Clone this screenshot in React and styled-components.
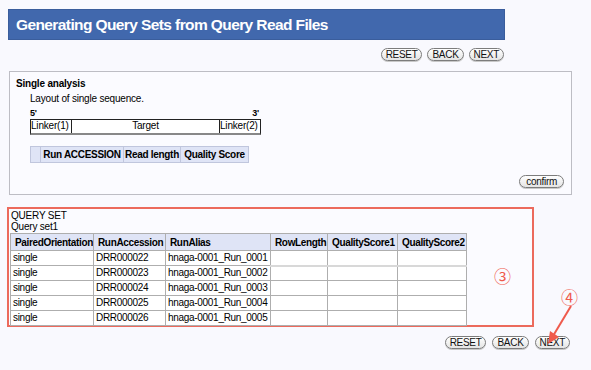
import React from 'react'
import styled, { createGlobalStyle } from 'styled-components'

const GlobalStyle = createGlobalStyle`
  body {
    margin: 0;
    background: #f9f9fe;
    font-family: "Liberation Sans", Arial, sans-serif;
    color: #000;
  }
`

const Page = styled.div`
  position: relative;
  width: 591px;
  height: 370px;
  padding-top: 9px;
  box-sizing: border-box;
`

const Header = styled.h1`
  margin: 0 0 0 8px;
  width: 497px;
  height: 31px;
  box-sizing: border-box;
  background: #4168ad;
  border: 1px solid #3a5d9c;
  color: #fff;
  font-size: 15.5px;
  font-weight: bold;
  line-height: 29px;
  padding-left: 7px;
  letter-spacing: -0.6px;
`

const ButtonRow = styled.div`
  display: flex;
  justify-content: flex-end;
  gap: ${p => p.gap || 5}px;
  width: ${p => p.width}px;
  margin-top: ${p => p.top}px;
`

const Pill = styled.button`
  height: 13px;
  padding: 0 ${p => p.pad || 4}px;
  border: 1px solid #7c7c7c;
  border-radius: 7px;
  background: linear-gradient(#ffffff, #e4e4e4);
  font-family: "Liberation Sans", Arial, sans-serif;
  font-size: 10px;
  letter-spacing: -0.3px;
  line-height: 11px;
  color: #111;
  box-shadow: 0 1px 0 #c8c8c8;
`

const Panel = styled.div`
  margin: ${p => p.top}px 0 0 ${p => p.left}px;
  width: ${p => p.width}px;
  height: ${p => p.height}px;
  box-sizing: border-box;
  border: ${p => (p.red ? '2px solid #ec6a5c' : '1px solid #bdbdc4')};
  background: #fbfbff;
  padding: ${p => p.pad};
  position: relative;
  font-size: 10px;
  letter-spacing: -0.2px;
`

const Bold = styled.div`
  font-weight: bold;
  font-size: 10px;
  height: 13px;
  line-height: 13px;
`

const Indent = styled.div`
  margin-left: 14px;
  width: 231px;
`

const Caption = styled.div`
  font-size: 10px;
  line-height: 12px;
  margin-top: 3px;
`

const Ends = styled.div`
  display: flex;
  justify-content: space-between;
  font-weight: bold;
  font-size: 9px;
  margin-top: 2px;
  height: 12px;
  line-height: 12px;
  padding-right: 2px;
`

const Bar = styled.div`
  display: flex;
  height: 13px;
  border: 1px solid #222;
  border-bottom: 2px solid #888;
  background: #fff;
  font-size: 10px;
  line-height: 12px;
`

const Seg = styled.div`
  width: ${p => p.w}px;
  text-align: ${p => p.align || 'left'};
  border-left: ${p => (p.first ? 'none' : '1px solid #222')};
  white-space: nowrap;
  overflow: hidden;
  ${p => p.grow && 'flex: 1;'}
`

const MiniTable = styled.table`
  border-collapse: collapse;
  table-layout: fixed;
  margin-top: 11px;
  font-size: 10px;
`

const MiniHead = styled.th`
  background: #dfe4f6;
  border: 1px solid #c0c6dd;
  height: 16px;
  padding: 0;
  font-weight: bold;
  width: ${p => p.w}px;
  box-sizing: border-box;
  text-align: center;
  white-space: nowrap;
  letter-spacing: -0.3px;
`

const ConfirmWrap = styled.div`
  position: absolute;
  right: 7px;
  bottom: 6px;
`

const Label = styled.div`
  font-size: 10px;
  line-height: 11px;
  padding-left: 1px;
`

const DataTable = styled.table`
  border-collapse: collapse;
  table-layout: fixed;
  font-size: 10px;
  margin-top: 1px;
`

const Th = styled.th`
  background: #dfe4f6;
  border: 1px solid #aeaeae;
  height: 17px;
  font-weight: bold;
  text-align: left;
  padding: 0 0 0 4px;
  width: ${p => p.w}px;
  box-sizing: border-box;
  white-space: nowrap;
  overflow: hidden;
  letter-spacing: -0.35px;
`

const Td = styled.td`
  border: 1px solid #aeaeae;
  border-bottom: ${p => (p.thick ? '2px solid #d8d8d8' : '1px solid #aeaeae')};
  height: 15px;
  box-sizing: border-box;
  line-height: 12px;
  padding: 0 0 0 2px;
  background: #fff;
  white-space: nowrap;
  overflow: hidden;
  letter-spacing: -0.3px;
`

const Mark = styled.span`
  position: absolute;
  left: ${p => p.x}px;
  top: ${p => p.y}px;
  color: #ef5a4c;
  font-size: 17px;
  font-family: "Noto Sans CJK JP", sans-serif;
  line-height: 1;
`

const Arrow = styled.svg`
  position: absolute;
  left: 540px;
  top: 300px;
`

const cols = [
  ['PairedOrientation', 83],
  ['RunAccession', 72],
  ['RunAlias', 105],
  ['RowLength', 57],
  ['QualityScore1', 70],
  ['QualityScore2', 69],
]

const rows = [1, 2, 3, 4, 5].map(i => ({
  orient: 'single',
  acc: `DRR00002${i + 1}`,
  alias: `hnaga-0001_Run_000${i}`,
}))

function Buttons({ width, top, gap }) {
  return (
    <ButtonRow width={width} top={top} gap={gap}>
      <Pill>RESET</Pill>
      <Pill>BACK</Pill>
      <Pill>NEXT</Pill>
    </ButtonRow>
  )
}

export default function App() {
  return (
    <Page>
      <GlobalStyle />
      <Header>Generating Query Sets from Query Read Files</Header>
      <Buttons width={504} top={8} />

      <Panel top={10} left={9} width={563} height={124} pad="5px 6px">
        <Bold>Single analysis</Bold>
        <Indent>
          <Caption>Layout of single sequence.</Caption>
          <Ends>
            <span>5'</span>
            <span>3'</span>
          </Ends>
          <Bar>
            <Seg first w={40}>Linker(1)</Seg>
            <Seg grow align="center">Target</Seg>
            <Seg w={40}>Linker(2)</Seg>
          </Bar>
          <MiniTable>
            <thead>
              <tr>
                <MiniHead w={10} />
                <MiniHead w={83}>Run ACCESSION</MiniHead>
                <MiniHead w={57}>Read length</MiniHead>
                <MiniHead w={68}>Quality Score</MiniHead>
              </tr>
            </thead>
          </MiniTable>
        </Indent>
        <ConfirmWrap>
          <Pill pad={6}>confirm</Pill>
        </ConfirmWrap>
      </Panel>

      <Panel red top={12} left={7} width={527} height={120} pad="1px 0 0 1px">
        <Label>QUERY SET</Label>
        <Label>Query set1</Label>
        <DataTable>
          <thead>
            <tr>
              {cols.map(([name, w]) => (
                <Th key={name} w={w}>{name}</Th>
              ))}
            </tr>
          </thead>
          <tbody>
            {rows.map((r, i) => (
              <tr key={r.acc}>
                <Td>{r.orient}</Td>
                <Td>{r.acc}</Td>
                <Td>{r.alias}</Td>
                <Td thick={i === 0} />
                <Td thick={i === 0} />
                <Td thick={i === 0} />
              </tr>
            ))}
          </tbody>
        </DataTable>
      </Panel>

      <Buttons width={570} top={9} gap={6} />

      <Mark x={494} y={267}>③</Mark>
      <Mark x={561} y={288}>④</Mark>
      <Arrow width="40" height="50" viewBox="0 0 40 50">
        <line x1="31" y1="6" x2="13" y2="36" stroke="#ef5a4c" strokeWidth="2" />
        <polygon points="8,44 10,31 19,37" fill="#ef5a4c" />
      </Arrow>
    </Page>
  )
}
